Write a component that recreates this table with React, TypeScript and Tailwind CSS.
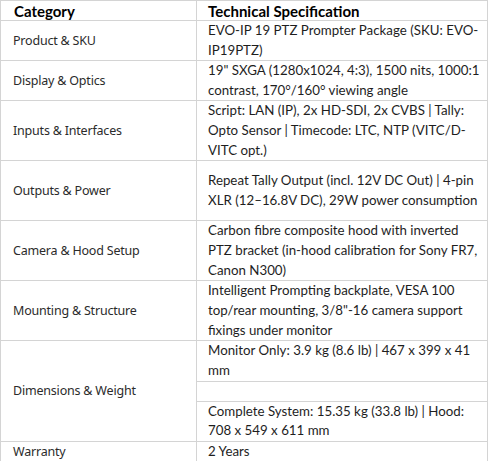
import React from 'react';

type Row = { category: string; spec: string; h: string };

const rows: Row[] = [
  { category: 'Product & SKU', spec: 'EVO-IP 19 PTZ Prompter Package (SKU: EVO-IP19PTZ)', h: 'h-[40px]' },
  { category: 'Display & Optics', spec: '19" SXGA (1280x1024, 4:3), 1500 nits, 1000:1 contrast, 170°/160° viewing angle', h: 'h-[40px]' },
  { category: 'Inputs & Interfaces', spec: 'Script: LAN (IP), 2x HD-SDI, 2x CVBS | Tally: Opto Sensor | Timecode: LTC, NTP (VITC/D-VITC opt.)', h: 'h-[60px]' },
  { category: 'Outputs & Power', spec: 'Repeat Tally Output (incl. 12V DC Out) | 4-pin XLR (12–16.8V DC), 29W power consumption', h: 'h-[60px]' },
  { category: 'Camera & Hood Setup', spec: 'Carbon fibre composite hood with inverted PTZ bracket (in-hood calibration for Sony FR7, Canon N300)', h: 'h-[60px]' },
  { category: 'Mounting & Structure', spec: 'Intelligent Prompting backplate, VESA 100 top/rear mounting, 3/8"-16 camera support fixings under monitor', h: 'h-[60px]' },
];

const cat = "border border-[#d4d4d4] pl-[12px] pr-1 py-0 align-middle text-[12.5px] leading-[18px] tracking-[-0.2px] text-[#2b2b2b] font-['Noto_Sans',sans-serif]";
const spec = "border border-[#d4d4d4] pl-[11px] pr-[5px] py-0 align-middle text-[13.3px] leading-[19.6px] text-[#1e1e1e] font-['Lato',sans-serif]";
const head = "border border-[#d4d4d4] p-0 text-left align-middle text-[15px] leading-[18px] font-bold text-black font-['Lato',sans-serif]";

export default function App() {
  return (
    <div className="bg-white w-[489px] h-[461px]">
      <table className="border-collapse w-[488px] table-fixed">
        <colgroup>
          <col className="w-[196px]" />
          <col />
        </colgroup>
        <thead>
          <tr className="h-[20px]">
            <th className={`${head} pl-[13px]`}>Category</th>
            <th className={`${head} pl-[11px]`}>Technical Specification</th>
          </tr>
        </thead>
        <tbody>
          {rows.map((r) => (
            <tr key={r.category} className={r.h}>
              <td className={cat}>{r.category}</td>
              <td className={spec}>{r.spec}</td>
            </tr>
          ))}
          <tr className="h-[40px]">
            <td rowSpan={3} className={cat}>Dimensions &amp; Weight</td>
            <td className={spec}>Monitor Only: 3.9 kg (8.6 lb) | 467 x 399 x 41 mm</td>
          </tr>
          <tr className="h-[20px]">
            <td className={spec}></td>
          </tr>
          <tr className="h-[40px]">
            <td className={spec}>Complete System: 15.35 kg (33.8 lb) | Hood: 708 x 549 x 611 mm</td>
          </tr>
          <tr className="h-[20px]">
            <td className={cat}>Warranty</td>
            <td className={spec}>2 Years</td>
          </tr>
        </tbody>
      </table>
    </div>
  );
}
